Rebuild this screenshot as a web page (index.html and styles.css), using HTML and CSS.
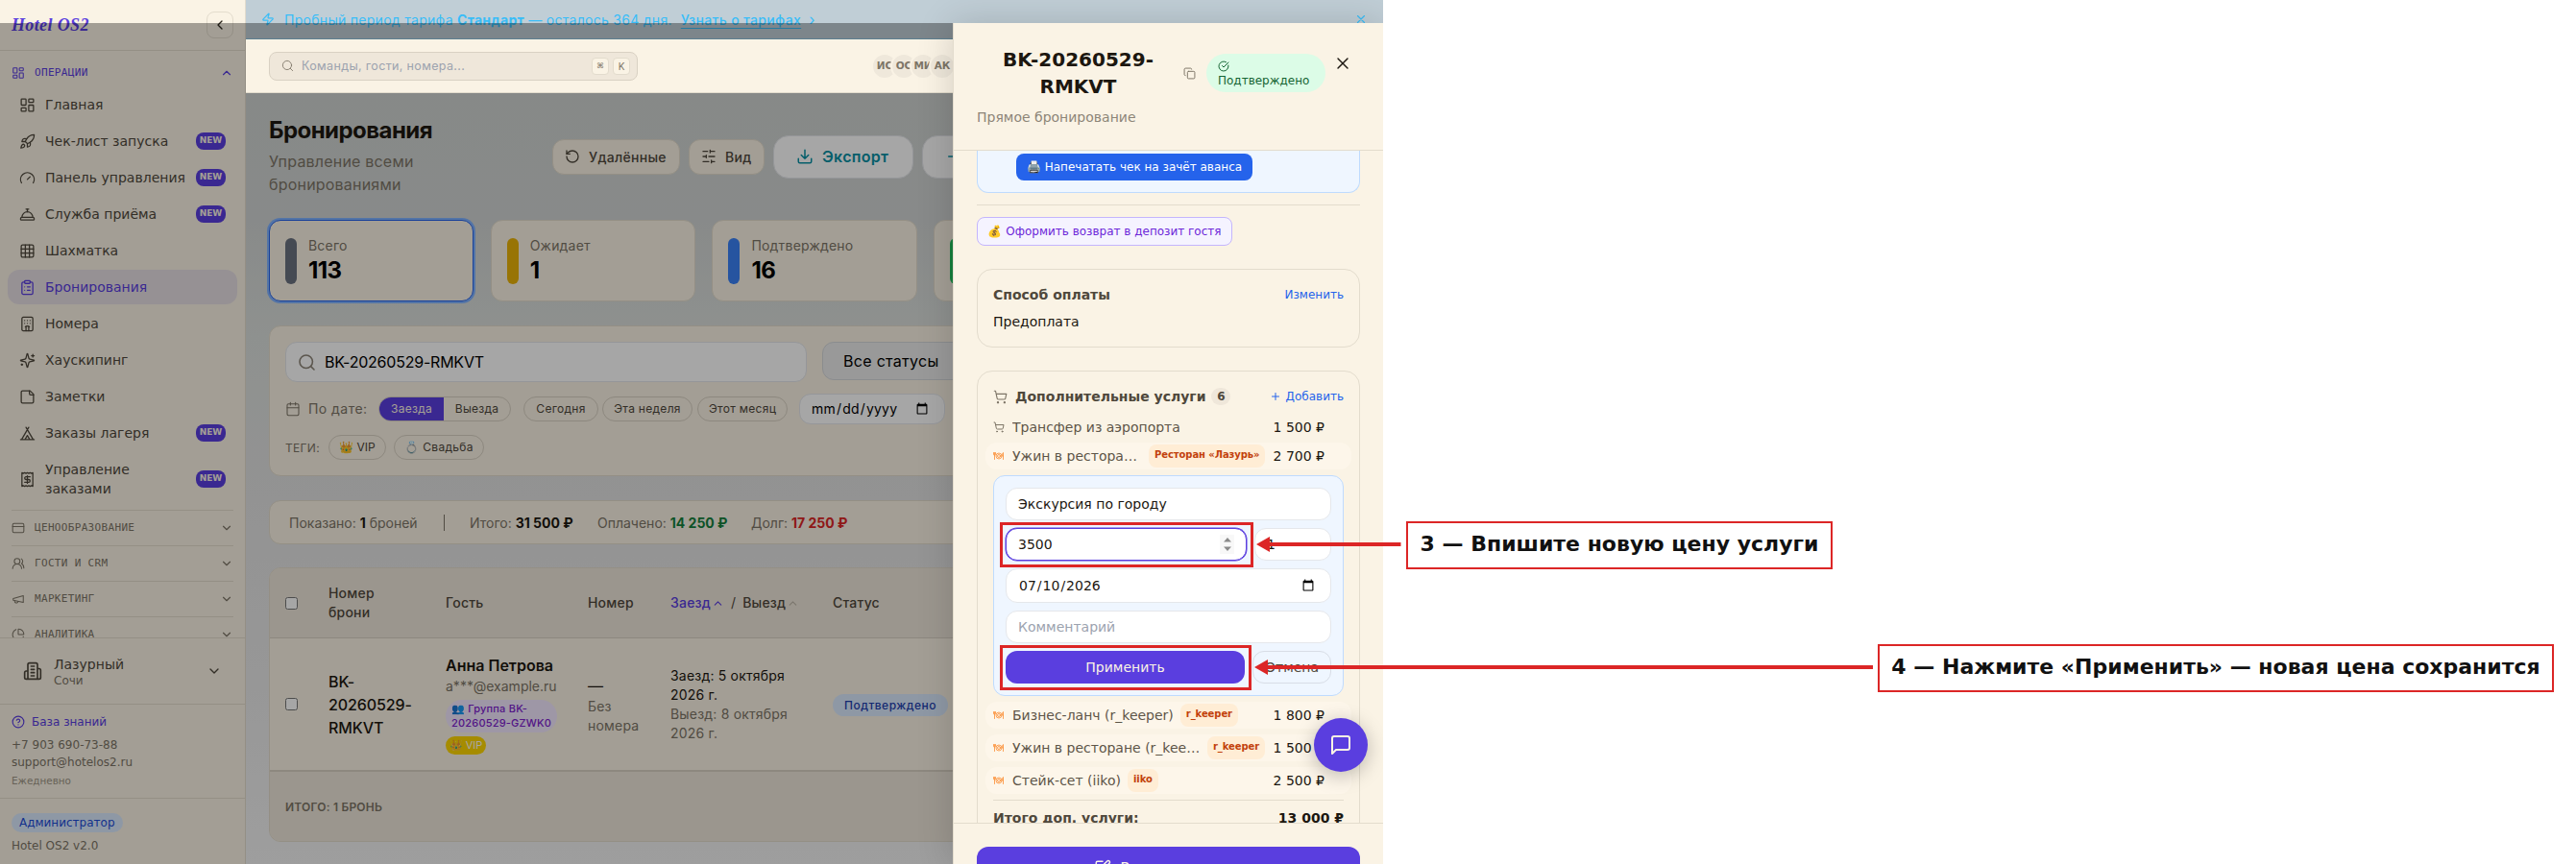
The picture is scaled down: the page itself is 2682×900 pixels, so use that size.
FILE: index.html
```html
<!DOCTYPE html>
<html lang="ru">
<head>
<meta charset="utf-8">
<title>Hotel OS2 — Бронирования</title>
<link rel="stylesheet" href="styles.css">
</head>
<body>
<svg class="defs" width="0" height="0" aria-hidden="true">
  <symbol id="dash" viewBox="0 0 24 24"><rect x="3" y="3" width="7" height="9" rx="1"/><rect x="14" y="3" width="7" height="5" rx="1"/><rect x="14" y="12" width="7" height="9" rx="1"/><rect x="3" y="16" width="7" height="5" rx="1"/></symbol>
  <symbol id="rocket" viewBox="0 0 24 24"><path d="M4.5 16.5c-1.5 1.26-2 5-2 5s3.74-.5 5-2c.71-.84.7-2.13-.09-2.91a2.18 2.18 0 0 0-2.91-.09z"/><path d="m12 15-3-3a22 22 0 0 1 2-3.95A12.88 12.88 0 0 1 22 2c0 2.72-.78 7.5-6 11a22.35 22.35 0 0 1-4 2z"/><path d="M9 12H4s.55-3.03 2-4c1.62-1.08 5 0 5 0"/><path d="M12 15v5s3.03-.55 4-2c1.08-1.62 0-5 0-5"/></symbol>
  <symbol id="gauge" viewBox="0 0 24 24"><path d="m12 14 4-4"/><path d="M3.34 19a10 10 0 1 1 17.32 0"/></symbol>
  <symbol id="bell" viewBox="0 0 24 24"><path d="M3 20a1 1 0 0 1-1-1v-1a2 2 0 0 1 2-2h16a2 2 0 0 1 2 2v1a1 1 0 0 1-1 1Z"/><path d="M20 16a8 8 0 1 0-16 0"/><path d="M12 4v4"/><path d="M10 4h4"/></symbol>
  <symbol id="grid" viewBox="0 0 24 24"><rect x="3" y="3" width="18" height="18" rx="2"/><path d="M3 9h18M3 15h18M9 3v18M15 3v18"/></symbol>
  <symbol id="clip" viewBox="0 0 24 24"><rect x="8" y="2" width="8" height="4" rx="1"/><path d="M16 4h2a2 2 0 0 1 2 2v14a2 2 0 0 1-2 2H6a2 2 0 0 1-2-2V6a2 2 0 0 1 2-2h2M12 11h4M12 16h4M8 11h.01M8 16h.01"/></symbol>
  <symbol id="hotel" viewBox="0 0 24 24"><rect x="4" y="2" width="16" height="20" rx="2"/><path d="M10 22v-6.57M12 11h.01M12 7h.01M14 15.43V22M15 16a5 5 0 0 0-6 0M16 11h.01M16 7h.01M8 11h.01M8 7h.01"/></symbol>
  <symbol id="sparkles" viewBox="0 0 24 24"><path d="M9.937 15.5A2 2 0 0 0 8.5 14.063l-6.135-1.582a.5.5 0 0 1 0-.962L8.5 9.936A2 2 0 0 0 9.937 8.5l1.582-6.135a.5.5 0 0 1 .963 0L14.063 8.5A2 2 0 0 0 15.5 9.937l6.135 1.581a.5.5 0 0 1 0 .964L15.5 14.063a2 2 0 0 0-1.437 1.437l-1.582 6.135a.5.5 0 0 1-.963 0zM20 3v4M22 5h-4M4 17v2M5 18H3"/></symbol>
  <symbol id="note" viewBox="0 0 24 24"><path d="M16 3H5a2 2 0 0 0-2 2v14a2 2 0 0 0 2 2h14a2 2 0 0 0 2-2V8Z"/><path d="M15 3v4a2 2 0 0 0 2 2h4"/></symbol>
  <symbol id="tent" viewBox="0 0 24 24"><path d="M3.5 21 14 3M20.5 21 10 3M15.5 21 12 15l-3.500 6M2 21h20"/></symbol>
  <symbol id="receipt" viewBox="0 0 24 24"><path d="M4 2v20l2-1 2 1 2-1 2 1 2-1 2 1 2-1 2 1V2l-2 1-2-1-2 1-2-1-2 1-2-1-2 1Z"/><path d="M16 8h-6a2 2 0 1 0 0 4h4a2 2 0 1 1 0 4H8M12 17.500v-11"/></symbol>
  <symbol id="card" viewBox="0 0 24 24"><rect x="2" y="4" width="20" height="16" rx="2.500"/><path d="M2 9.500h20"/></symbol>
  <symbol id="users" viewBox="0 0 24 24"><path d="M18 21a8 8 0 0 0-16 0"/><circle cx="10" cy="8" r="5"/><path d="M22 20c0-3.370-2-6.500-4-8a5 5 0 0 0-.45-8.300"/></symbol>
  <symbol id="mega" viewBox="0 0 24 24"><path d="m3 11 18-5v12L3 14v-3zM11.600 16.800a3 3 0 1 1-5.800-1.600"/></symbol>
  <symbol id="pie" viewBox="0 0 24 24"><path d="M21 12c.552 0 1.005-.449.950-.998a10 10 0 0 0-8.953-8.951c-.550-.055-.998.398-.998.950v8a1 1 0 0 0 1 1z"/><path d="M21.210 15.890A10 10 0 1 1 8 2.830"/></symbol>
  <symbol id="building" viewBox="0 0 24 24"><path d="M6 22V4a2 2 0 0 1 2-2h8a2 2 0 0 1 2 2v18ZM6 12H4a2 2 0 0 0-2 2v6a2 2 0 0 0 2 2h2M18 9h2a2 2 0 0 1 2 2v9a2 2 0 0 1-2 2h-2M10 6h4M10 10h4M10 14h4M10 18h4"/></symbol>
  <symbol id="help" viewBox="0 0 24 24"><circle cx="12" cy="12" r="10"/><path d="M9.090 9a3 3 0 0 1 5.830 1c0 2-3 3-3 3M12 17h.01"/></symbol>
  <symbol id="down" viewBox="0 0 24 24"><path d="m6 9 6 6 6-6"/></symbol>
  <symbol id="up" viewBox="0 0 24 24"><path d="m18 15-6-6-6 6"/></symbol>
  <symbol id="left" viewBox="0 0 24 24"><path d="m15 18-6-6 6-6"/></symbol>
  <symbol id="zap" viewBox="0 0 24 24"><path d="M4 14a1 1 0 0 1-.78-1.630l9.900-10.200a.5.5 0 0 1 .860.460l-1.920 6.020A1 1 0 0 0 13 10h7a1 1 0 0 1 .780 1.630l-9.900 10.200a.5.5 0 0 1-.860-.460l1.920-6.020A1 1 0 0 0 11 14z"/></symbol>
  <symbol id="search" viewBox="0 0 24 24"><circle cx="11" cy="11" r="8.500"/><path d="m21.500 21.500-4.300-4.300"/></symbol>
  <symbol id="undo" viewBox="0 0 24 24"><path d="M3 12a9 9 0 1 0 9-9 9.750 9.750 0 0 0-6.740 2.740L3 8"/><path d="M3 3v5h5"/></symbol>
  <symbol id="sliders" viewBox="0 0 24 24"><path d="M21 4h-7M10 4H3M21 12h-9M8 12H3M21 20h-5M12 20H3M14 2v4M8 10v4M16 18v4"/></symbol>
  <symbol id="download" viewBox="0 0 24 24"><path d="M21 15v4a2 2 0 0 1-2 2H5a2 2 0 0 1-2-2v-4M7 10l5 5 5-5M12 15V3"/></symbol>
  <symbol id="plus" viewBox="0 0 24 24"><path d="M5 12h14M12 5v14"/></symbol>
  <symbol id="cal" viewBox="0 0 24 24"><path d="M8 2v4M16 2v4M3 10h18"/><rect x="3" y="4" width="18" height="18" rx="2"/></symbol>
  <symbol id="copy" viewBox="0 0 24 24"><rect x="8" y="8" width="14" height="14" rx="2"/><path d="M4 16c-1.100 0-2-.9-2-2V4c0-1.100.9-2 2-2h10c1.100 0 2 .9 2 2"/></symbol>
  <symbol id="check" viewBox="0 0 24 24"><path d="M21.801 10A10 10 0 1 1 17 3.335M9 11l3 3L22 4"/></symbol>
  <symbol id="x" viewBox="0 0 24 24"><path d="M18 6 6 18M6 6l12 12"/></symbol>
  <symbol id="cart" viewBox="0 0 24 24"><circle cx="8" cy="21" r="1"/><circle cx="19" cy="21" r="1"/><path d="M2.050 2.050h2l2.660 12.420a2 2 0 0 0 2 1.580h9.780a2 2 0 0 0 1.950-1.570l1.650-7.430H5.120"/></symbol>
  <symbol id="chat" viewBox="0 0 24 24"><path d="M21 15a2 2 0 0 1-2 2H7l-4 4V5a2 2 0 0 1 2-2h14a2 2 0 0 1 2 2z"/></symbol>
  <symbol id="edit" viewBox="0 0 24 24"><path d="M12 3H5a2 2 0 0 0-2 2v14a2 2 0 0 0 2 2h14a2 2 0 0 0 2-2v-7M18.375 2.625a2.121 2.121 0 1 1 3 3L12 15l-4 1 1-4Z"/></symbol>
  <symbol id="dish" viewBox="0 0 24 16"><circle cx="12" cy="8" r="6"/><circle cx="12" cy="8" r="3"/><path d="M3 1v14M1 1v4c0 2 4 2 4 0V1M21 15V1c-1.800 1-2 5-1 7h1"/></symbol>
</svg>

<div class="app">
  <aside class="sidebar">
    <div class="brand"><span class="logo">Hotel OS2</span><span class="collapse"><svg class="i16"><use href="#left"/></svg></span></div>
    <nav class="nav">
      <div class="sec open"><svg class="i14"><use href="#dash"/></svg><span>ОПЕРАЦИИ</span><svg class="chev"><use href="#up"/></svg></div>
      <div class="items">
        <a class="item"><svg><use href="#dash"/></svg><span>Главная</span></a>
        <a class="item"><svg><use href="#rocket"/></svg><span>Чек-лист запуска</span><b>NEW</b></a>
        <a class="item"><svg><use href="#gauge"/></svg><span>Панель управления</span><b>NEW</b></a>
        <a class="item"><svg><use href="#bell"/></svg><span>Служба приёма</span><b>NEW</b></a>
        <a class="item"><svg><use href="#grid"/></svg><span>Шахматка</span></a>
        <a class="item active"><svg><use href="#clip"/></svg><span>Бронирования</span></a>
        <a class="item"><svg><use href="#hotel"/></svg><span>Номера</span></a>
        <a class="item"><svg><use href="#sparkles"/></svg><span>Хаускипинг</span></a>
        <a class="item"><svg><use href="#note"/></svg><span>Заметки</span></a>
        <a class="item"><svg><use href="#tent"/></svg><span>Заказы лагеря</span><b>NEW</b></a>
        <a class="item tall"><svg><use href="#receipt"/></svg><span>Управление<br>заказами</span><b>NEW</b></a>
      </div>
      <div class="sec"><svg class="i14"><use href="#card"/></svg><span>ЦЕНООБРАЗОВАНИЕ</span><svg class="chev"><use href="#down"/></svg></div>
      <div class="sec"><svg class="i14"><use href="#users"/></svg><span>ГОСТИ И CRM</span><svg class="chev"><use href="#down"/></svg></div>
      <div class="sec"><svg class="i14"><use href="#mega"/></svg><span>МАРКЕТИНГ</span><svg class="chev"><use href="#down"/></svg></div>
      <div class="sec"><svg class="i14"><use href="#pie"/></svg><span>АНАЛИТИКА</span><svg class="chev"><use href="#down"/></svg></div>
    </nav>
    <div class="property"><svg class="i20"><use href="#building"/></svg><div><div class="pname">Лазурный</div><div class="pcity">Сочи</div></div><svg class="i16"><use href="#down"/></svg></div>
    <div class="support"><a><svg class="i14"><use href="#help"/></svg>База знаний</a><div>+7 903 690-73-88</div><div>support@hotelos2.ru</div><small>Ежедневно</small></div>
    <div class="role"><span>Администратор</span><div>Hotel OS2 v2.0</div></div>
  </aside>

  <main class="main">
    <div class="banner"><svg class="i14"><use href="#zap"/></svg><span>Пробный период тарифа <b>Стандарт</b> — осталось 364 дня.</span><u>Узнать о тарифах</u><span class="gt">›</span><svg class="bx"><use href="#x"/></svg></div>
    <div class="topbar">
      <div class="cmd"><svg><use href="#search"/></svg><span>Команды, гости, номера...</span><kbd class="mod">⌘</kbd><kbd>K</kbd></div>
      <div class="avatars"><i>ИС</i><i>ОС</i><i>МИ</i><i>АК</i></div>
    </div>
    <div class="content">
      <div class="head">
        <div class="htext"><h1>Бронирования</h1><p>Управление всеми бронированиями</p></div>
        <div class="btn del"><svg><use href="#undo"/></svg>Удалённые</div>
        <div class="btn view"><svg><use href="#sliders"/></svg>Вид</div>
        <div class="btn big"><svg><use href="#download"/></svg>Экспорт</div>
        <div class="btn big"><svg><use href="#plus"/></svg>Новое</div>
      </div>
      <div class="stats">
        <div class="stat sel"><i class="gray"></i><div><span>Всего</span><b>113</b></div></div>
        <div class="stat"><i class="yellow"></i><div><span>Ожидает</span><b>1</b></div></div>
        <div class="stat"><i class="blue"></i><div><span>Подтверждено</span><b>16</b></div></div>
        <div class="stat"><i class="green"></i></div>
        <div class="stat"></div>
      </div>
      <div class="filters">
        <div class="frow one"><div class="find"><svg><use href="#search"/></svg>BK-20260529-RMKVT</div><div class="select">Все статусы</div></div>
        <div class="frow two"><svg class="calic"><use href="#cal"/></svg><span class="bydate">По дате:</span>
          <div class="seg"><span class="on">Заезда</span><span>Выезда</span></div>
          <span class="pill p1">Сегодня</span><span class="pill p2">Эта неделя</span><span class="pill p3">Этот месяц</span>
          <input class="date" type="date"></div>
        <div class="frow three"><span class="tags">ТЕГИ:</span><span class="pill vip">👑 VIP</span><span class="pill wed">💍 Свадьба</span></div>
      </div>
      <div class="summary"><span class="s1">Показано: <b>1</b> броней</span><i></i><span class="s2">Итого: <b>31 500 ₽</b></span><span class="s3">Оплачено: <b class="g">14 250 ₽</b></span><span>Долг: <b class="r">17 250 ₽</b></span></div>
      <div class="table">
        <div class="tr th"><span><input type="checkbox"></span><span>Номер<br>брони</span><span>Гость</span><span>Номер</span><span class="sort"><em>Заезд</em><svg class="v"><use href="#up"/></svg><q>/</q>Выезд<svg class="f"><use href="#up"/></svg></span><span>Статус</span></div>
        <div class="tr td"><span><input type="checkbox"></span><span class="num">BK-<br>20260529-<br>RMKVT</span>
          <span class="guest"><b>Анна Петрова</b><span class="mail">a***@example.ru</span><span class="group">👥 Группа BK-<br>20260529-GZWK0</span><span class="viptag">👑 VIP</span></span>
          <span class="room"><b>—</b>Без<br>номера</span>
          <span class="dates"><b>Заезд: 5 октября<br>2026 г.</b>Выезд: 8 октября<br>2026 г.</span>
          <span><span class="status">Подтверждено</span></span></div>
        <div class="tfoot">ИТОГО: 1 БРОНЬ</div>
      </div>
    </div>
  </main>

  <div class="overlay"></div>

  <section class="drawer">
    <header class="dhead">
      <div class="drow"><h2>BK-20260529-RMKVT</h2><svg class="cp"><use href="#copy"/></svg><span class="ok"><svg><use href="#check"/></svg>Подтверждено</span><svg class="close"><use href="#x"/></svg></div>
      <p>Прямое бронирование</p>
    </header>
    <div class="dbody">
      <div class="advance"><span>🖨️ Напечатать чек на зачёт аванса</span></div>
      <hr>
      <div class="deposit">💰 Оформить возврат в депозит гостя</div>
      <div class="pay"><div class="ptop"><b>Способ оплаты</b><a>Изменить</a></div><div>Предоплата</div></div>
      <div class="services">
        <div class="stitle"><svg><use href="#cart"/></svg><b>Дополнительные услуги</b><i>6</i><a><svg><use href="#plus"/></svg>Добавить</a></div>
        <div class="srow plain"><svg><use href="#cart"/></svg><span class="sname">Трансфер из аэропорта</span><span class="price">1 500 ₽</span></div>
        <div class="srow food"><svg><use href="#dish"/></svg><span class="sname cut1">Ужин в ресторане</span><em>Ресторан «Лазурь»</em><span class="price">2 700 ₽</span></div>
        <div class="form">
          <div class="inp">Экскурсия по городу</div>
          <div class="pair"><div class="inp focus">3500<span class="spin"><svg viewBox="0 0 10 16"><path d="M1 5.500 5 1l4 4.500zM1 10.500 5 15l4-4.500z"/></svg></span></div><div class="inp qty">1</div></div>
          <input class="inp dt" type="date" value="2026-07-10">
          <div class="inp ph">Комментарий</div>
          <div class="acts"><div class="apply">Применить</div><div class="cancel">Отмена</div></div>
        </div>
        <div class="srow food"><svg><use href="#dish"/></svg><span class="sname">Бизнес-ланч (r_keeper)</span><em>r_keeper</em><span class="price">1 800 ₽</span></div>
        <div class="srow food"><svg><use href="#dish"/></svg><span class="sname cut2">Ужин в ресторане (r_keeper)</span><em>r_keeper</em><span class="price">1 500 ₽</span></div>
        <div class="srow food"><svg><use href="#dish"/></svg><span class="sname">Стейк-сет (iiko)</span><em>iiko</em><span class="price">2 500 ₽</span></div>
        <div class="total"><span>Итого доп. услуги:</span><b>13 000 ₽</b></div>
      </div>
    </div>
    <footer class="dfoot"><div><svg><use href="#edit"/></svg>Редактировать</div></footer>
  </section>
  <div class="fab"><svg><use href="#chat"/></svg></div>
</div>

<div class="mark m1"></div>
<div class="mark m2"></div>
<svg class="arrows" width="2682" height="900"><path d="M1320 565h138.500v4H1320zM1308 567l14-8v16zM1318 693h632v4h-632zM1306 695l14-8v16z"/></svg>
<div class="note n1">3 — Впишите новую цену услуги</div>
<div class="note n2">4 — Нажмите «Применить» — новая цена сохранится</div>
</body>
</html>
```
FILE: styles.css
```css
* { box-sizing: border-box; }
body { margin: 0; width: 2682px; height: 900px; overflow: hidden; position: relative; background: #fff; font-family: "DejaVu Sans", sans-serif; color: #1c1710; }
svg { fill: none; stroke: currentColor; stroke-width: 2; stroke-linecap: round; stroke-linejoin: round; flex: none; }
.defs { position: absolute; }
h1, h2, p { margin: 0; }
i, em { font-style: normal; }
.i14 { width: 14px; height: 14px; } .i16 { width: 16px; height: 16px; } .i20 { width: 20px; height: 20px; }

.app { position: relative; width: 1440px; height: 900px; overflow: hidden; display: flex; }

/* Sidebar */
.sidebar { width: 256px; height: 900px; display: flex; flex-direction: column; background: #faf3e5; border-right: 1px solid #e3dccd; color: #4f483c; flex: none; }
.brand { height: 53px; flex: none; border-bottom: 1px solid #e3dccd; display: flex; justify-content: space-between; align-items: center; padding: 0 12px; }
.logo { font: italic bold 18px "Liberation Serif", serif; letter-spacing: .36px; color: #5a3edf; }
.collapse { width: 28px; height: 28px; border: 1px solid #e3dccd; border-radius: 8px; display: grid; place-items: center; color: #2e281e; }
.nav { flex: 1; overflow: hidden; padding: 8px 12px 0; }
.sec { height: 37px; border-top: 1px solid #e3dccd; display: flex; align-items: center; font: 11px "DejaVu Sans Mono", monospace; letter-spacing: .33px; color: #7d7567; }
.sec span { margin-left: 10px; flex: 1; position: relative; top: -1px; }
.sec.open { border: 0; height: 30px; color: #5a3edf; }
.sec .i14 { stroke-width: 1.8; }
.chev { width: 14px; height: 14px; }
.items { display: flex; flex-direction: column; gap: 2px; margin: 0 -4px 4px; }
.item { height: 36px; display: flex; align-items: center; padding: 0 12px; border-radius: 12px; font-size: 14px; line-height: 20px; }
.item svg { width: 17px; height: 17px; margin-right: 10px; stroke-width: 1.8; }
.item span { flex: 1; white-space: nowrap; }
.item b { width: 31px; height: 18px; border-radius: 8px; background: #5a3edf; color: #faf3e5; font-size: 9px; line-height: 16px; text-align: center; }
.item.active { background: #e7dfe4; color: #5a3edf; }
.item.tall { height: 56px; }
.property { height: 69px; flex: none; border-top: 1px solid #e3dccd; display: flex; align-items: center; padding: 0 24px; }
.property > div { flex: 1; margin-left: 12px; }
.pname { font-size: 14px; line-height: 20px; } .pcity { font-size: 12px; line-height: 15px; color: #7d7567; }
.support { height: 98px; flex: none; border-top: 1px solid #e3dccd; padding: 9px 12px; font-size: 12px; line-height: 18px; color: #7d7567; }
.support a { display: flex; align-items: center; gap: 7px; color: #5a3edf; margin-bottom: 6px; }
.support small { display: block; font-size: 10.4px; line-height: 20px; color: #a09787; }
.role { height: 69px; flex: none; border-top: 1px solid #e3dccd; padding: 15px 12px; font-size: 12px; color: #7d7567; }
.role span { display: inline-block; height: 20px; line-height: 20px; border-radius: 10px; padding: 0 8px; background: #dbeafe; color: #1d4ed8; }
.role div { margin-top: 6px; line-height: 16px; }

/* Main column */
.main { width: 1184px; flex: none; font-family: Inter, sans-serif; background: linear-gradient(#cdd2d0 0, #d2d5d4 230px, #dbdfdc 350px, #e2e2e2 520px, #e8e8e8 700px, #f3f3f3 900px); }
.banner { height: 41px; background: #c0ced6; border-bottom: 1px solid #8fc5df; display: flex; align-items: center; padding: 0 16px; color: #38bdf8; font-size: 14px; letter-spacing: .29px; }
.banner span { margin-left: 10px; } .banner u { margin-left: 9px; text-underline-offset: 3px; font-weight: 500; letter-spacing: .35px; }
.banner .gt { margin-left: 8px; font-size: 16px; }
.banner .bx { width: 14px; height: 14px; margin-left: auto; }
.topbar { position: relative; z-index: 2; height: 56px; background: #faf3e5; border-bottom: 1px solid #e3dccd; display: flex; align-items: center; padding: 0 24px; }
.cmd { width: 384px; height: 30px; border: 1px solid #d9d1c3; border-radius: 8px; background: #efe7da; display: flex; align-items: center; padding: 0 7px 0 12px; color: #9ca3af; }
.cmd svg { width: 13px; height: 13px; color: #7d7567; stroke-width: 1.6; margin-right: 8px; }
.cmd span { flex: 1; font: 12.5px Inter, sans-serif; letter-spacing: .35px; }
kbd { width: 18px; height: 18px; margin-left: 4px; border: 1px solid #e3dccd; border-radius: 4px; background: #faf3e5; color: #7d7567; display: grid; place-items: center; font: 10px Inter, "DejaVu Sans", sans-serif; }
kbd.mod { font: 8px "DejaVu Sans", sans-serif; }
.avatars { display: flex; margin-left: 243px; }
.avatars i { width: 28px; height: 28px; border-radius: 50%; border: 2px solid #faf3e5; background: #efe8db; margin-right: -8px; font: bold 10.500px/23px "DejaVu Sans", sans-serif; text-align: center; color: #7d7567; white-space: nowrap; position: relative; }
.content { padding: 24px 24px 0; width: 1184px; }
.head { height: 108px; display: flex; align-items: center; gap: 9px; padding-bottom: 24px; }
.htext { width: 286px; position: relative; top: -1px; }
h1 { font-size: 24px; line-height: 32px; letter-spacing: -.55px; color: #1c1710; }
.htext p { width: 190px; font-size: 16px; line-height: 24px; letter-spacing: .2px; color: #7d7567; margin-top: 4px; }
.btn { height: 37px; border: 1px solid #e3dccd; border-radius: 12px; background: #faf3e5; display: flex; align-items: center; font-size: 14px; font-weight: 500; letter-spacing: .3px; color: #4f483c; flex: none; padding: 0 12px; }
.btn svg { width: 16px; height: 16px; margin-right: 9px; }
.btn.del { width: 133px; } .btn.view { width: 79px; }
.btn.big { height: 45px; width: 146px; border-radius: 16px; background: #fff; border-color: #e5e7eb; color: #0891a5; font-size: 16px; font-weight: 600; padding: 0 23px; }
.btn.big svg { width: 18px; height: 18px; }
.stats { display: grid; grid-template-columns: repeat(5, 1fr); gap: 17.5px; }
.stat { height: 85px; border: 1px solid #e3dccd; border-radius: 12px; background: #faf3e5; padding: 0 16px; display: flex; align-items: center; gap: 12px; }
.stat.sel { border-color: #2563eb; box-shadow: 0 0 0 2px #80b2ff; }
.stat > i { width: 12px; height: 48px; border-radius: 6px; }
.gray { background: #6b7280; } .yellow { background: #eab308; } .blue { background: #3b82f6; } .green { background: #22c55e; }
.stat span { display: block; font-size: 14px; line-height: 20px; color: #7d7567; letter-spacing: .2px; }
.stat b { display: block; font-size: 24px; line-height: 32px; color: #000; letter-spacing: -.6px; }
.filters { margin-top: 25px; height: 157px; border: 1px solid #e3dccd; border-radius: 12px; background: #faf3e5; padding: 16px; }
.frow { display: flex; align-items: center; }
.frow.one { align-items: flex-start; height: 42px; }
.find { width: 543px; height: 42px; border: 1px solid #e5e7eb; border-radius: 12px; background: #fff; display: flex; align-items: center; padding-left: 12px; font-size: 16px; color: #000; letter-spacing: -.22px; }
.find svg { width: 19px; height: 19px; margin-right: 9px; color: #8d8578; }
.select { width: 400px; height: 40px; margin-left: 16px; border: 1px solid #d5d7db; border-radius: 12px; background: #ececec; padding-left: 21px; line-height: 38px; font-size: 16px; color: #000; letter-spacing: .3px; }
.frow.two { height: 31px; margin-top: 12px; }
.calic { width: 16px; height: 16px; color: #7d7567; stroke-width: 1.6; }
.bydate { width: 81px; padding-left: 8px; font-size: 14px; letter-spacing: .45px; color: #7d7567; white-space: nowrap; }
.seg { display: flex; width: 138px; height: 26px; border: 1px solid #d9d1c3; border-radius: 13px; overflow: hidden; font-size: 12px; line-height: 24px; letter-spacing: .25px; color: #4f483c; text-align: center; }
.seg span { flex: 1; } .seg .on { flex: none; width: 67px; background: #5a3edf; color: #faf3e5; }
.pill { height: 26px; border: 1px solid #d9d1c3; border-radius: 13px; font-size: 12px; line-height: 24px; letter-spacing: .3px; color: #4f483c; text-align: center; }
.p1 { width: 78px; margin-left: 13px; } .p2 { width: 94px; margin-left: 4px; } .p3 { width: 94px; margin-left: 5px; }
input.date { width: 152px; height: 32px; margin-left: 12px; border: 1px solid #e5e7eb; border-radius: 12px; background: #fff; font: 14px Inter, sans-serif; letter-spacing: .2px; padding: 0 14px 0 11px; color: #000; }
.frow.three { height: 26px; margin-top: 12px; }
.tags { width: 45px; font-size: 12px; color: #7d7567; letter-spacing: .3px; }
.vip { width: 60px; letter-spacing: 0; } .wed { width: 94px; margin-left: 8px; }
.summary { margin-top: 25px; height: 46px; border: 1px solid #e3dccd; border-radius: 12px; background: #faf3e5; display: flex; align-items: center; padding-left: 20px; font-size: 14px; color: #7d7567; white-space: nowrap; }
.summary b { color: #1c1710; } .summary b.g { color: #15803d; } .summary b.r { color: #dc2626; }
.summary i { width: 1px; height: 17px; background: #7d7567; margin-right: 26px; }
.s1 { width: 161px; } .s2 { width: 133px; } .s3 { width: 160px; }
.table { margin-top: 24px; height: 286px; border: 1px solid #e3dccd; border-radius: 12px; background: #faf3e5; overflow: hidden; }
.tr { display: grid; grid-template-columns: 45px 122px 148px 86px 169px 200px; padding-left: 16px; align-items: center; font-size: 14px; line-height: 20px; letter-spacing: .2px; }
.th { height: 73px; background: #efe7da; border-bottom: 1px solid #d9d1c3; font-weight: 500; color: #4f483c; }
input[type=checkbox] { display: block; width: 13px; height: 13px; margin: 0; }
.sort { display: flex; align-items: center; white-space: nowrap; } .sort em { color: #5a3edf; } .sort q { quotes: none; margin: 0 7px; font-weight: 400; }
.sort svg { width: 13px; height: 13px; margin-left: 1px; } .sort .v { color: #5a3edf; } .sort .f { opacity: .3; }
.td { height: 139px; border-bottom: 2px solid #d9d1c3; }
.num { font-size: 16px; line-height: 24px; font-weight: 500; letter-spacing: -.1px; }
.guest b { display: block; font-size: 16px; line-height: 24px; font-weight: 600; letter-spacing: 0; }
.mail { display: block; color: #7d7567; line-height: 20px; letter-spacing: 0; }
.group { display: block; width: 116px; height: 34px; margin-top: 4px; border-radius: 17px; background: #f3e8ff; color: #7e22ce; font-size: 11px; font-weight: 500; line-height: 15px; padding: 2px 6px; white-space: nowrap; }
.viptag { display: block; width: 42px; height: 19px; margin-top: 4px; border-radius: 10px; background: #ffd700; color: #fff; font-size: 11px; line-height: 19px; text-align: center; letter-spacing: 0; }
.room, .dates { color: #7d7567; } .room b { display: block; font-size: 16px; line-height: 24px; font-weight: 400; color: #1c1710; }
.dates b { display: block; font-weight: 400; color: #1c1710; }
.status { display: inline-block; position: relative; top: 1px; height: 23px; line-height: 23px; padding: 0 12px; border-radius: 12px; background: #dbeafe; color: #1e40af; font-size: 12px; font-weight: 500; letter-spacing: .5px; }
.tfoot { height: 73px; background: #efe7da; padding-left: 16px; line-height: 73px; font-size: 12px; font-weight: 600; letter-spacing: .2px; color: #7d7567; }

.overlay { position: absolute; left: 0; top: 24px; width: 1440px; height: 876px; background: rgba(0,0,0,.35); z-index: 1; }

/* Booking drawer */
.drawer { position: absolute; z-index: 3; left: 992px; top: 24px; width: 448px; height: 876px; background: #faf3e5; border-left: 1px solid #e3dccd; box-shadow: 0 0 36px rgba(0,0,0,.16); display: flex; flex-direction: column; }
.dhead { height: 133px; flex: none; border-bottom: 1px solid #e3dccd; padding: 24px 24px 0; }
.drow { display: flex; height: 56px; align-items: center; }
h2 { width: 209px; margin: 0 6px 0 0; padding-left: 2px; text-align: center; font-size: 20px; line-height: 28px; font-weight: bold; }
.cp { width: 13px; height: 13px; color: #7d7567; stroke-width: 1.8; }
.ok { width: 124px; height: 40px; margin-left: 11px; border-radius: 20px; background: #dcfce7; color: #166534; font-size: 12px; line-height: 16px; padding: 7px 12px; }
.ok svg { display: block; width: 12px; height: 12px; margin-bottom: 1px; }
.drow .close { width: 20px; height: 20px; margin: -20px 0 0 8px; stroke-width: 1.7; }
.dhead p { margin-top: 8px; font-size: 14px; line-height: 20px; color: #8d8578; }
.dbody { flex: 1; overflow: hidden; padding: 0 24px; display: flex; flex-direction: column; }
.dbody > * { flex: none; }
.advance { height: 44px; border: 1px solid #bfdbfe; border-top: 0; border-radius: 0 0 12px 12px; background: #eff6ff; padding: 3px 40px; }
.advance span { display: block; width: 246px; height: 28px; border-radius: 8px; background: #2563eb; color: #fff; font-size: 12px; line-height: 28px; text-align: center; white-space: nowrap; }
hr { width: 100%; height: 1px; border: 0; background: #e3dccd; margin: 12px 0; }
.deposit { width: 266px; height: 30px; border: 1px solid #c4b5fd; border-radius: 8px; background: #f5f3ff; color: #6d28d9; font-size: 12px; line-height: 28px; text-align: center; white-space: nowrap; }
.pay { margin-top: 24px; height: 82px; border: 1px solid #e3dccd; border-radius: 16px; padding: 16px; font-size: 14px; line-height: 20px; }
.ptop { display: flex; justify-content: space-between; margin-bottom: 8px; color: #4f483c; } .ptop a { font-size: 12px; color: #2563eb; }
.services { margin-top: 24px; height: 500px; border: 1px solid #e3dccd; border-radius: 16px; padding: 15px 16px; }
.stitle { height: 22px; display: flex; align-items: center; font-size: 14px; color: #4f483c; }
.stitle > svg { width: 15px; height: 15px; margin-right: 8px; color: #7d7567; stroke-width: 1.8; }
.stitle i { width: 20px; height: 18px; border-radius: 9px; margin-left: 6px; background: #efe7da; font-size: 12px; font-weight: bold; line-height: 18px; text-align: center; }
.stitle a { margin-left: auto; display: flex; align-items: center; gap: 5px; font-size: 12px; color: #2563eb; } .stitle a svg { width: 12px; height: 12px; }
.srow { height: 28px; margin: 0 -8px 6px; padding: 0 28px 0 8px; border-radius: 12px; display: flex; align-items: center; font-size: 14px; }
.srow svg { width: 12px; height: 12px; margin-right: 8px; color: #7d7567; }
.srow.plain { height: 20px; margin-top: 11px; }
.food { background: #fdf6ea; } .food svg { color: #fb923c; stroke-width: 1.7; }
.sname { color: #5d5548; white-space: nowrap; overflow: hidden; text-overflow: ellipsis; } .cut1 { width: 132px; } .cut2 { width: 198px; }
.srow em { height: 24px; margin-left: 7px; padding: 0 6px; border-radius: 8px; background: #ffedd5; color: #c2410c; font-size: 10px; font-weight: bold; line-height: 22px; letter-spacing: -.08px; white-space: nowrap; }
.srow .cut1 + em { margin-left: 10px; } .srow .cut2 + em { margin-left: 5px; }
.price { margin-left: auto; white-space: nowrap; }
.form { height: 230px; margin-bottom: 6px; border: 1px solid #bfdbfe; border-radius: 12px; background: #eff6ff; padding: 12px; display: flex; flex-direction: column; gap: 8px; }
.inp { width: 100%; height: 34px; flex: none; border: 1px solid #e5e7eb; border-radius: 12px; background: #fff; padding: 0 12px; font: 14px/32px "DejaVu Sans", sans-serif; color: #1c1710; }
.pair { display: flex; gap: 8px; }
.inp.focus { width: 251px; border-color: #5a3edf; box-shadow: 0 0 0 .5px #5a3edf; display: flex; justify-content: space-between; }
.inp.qty { flex: 1; width: 0; }
.spin { width: 15px; height: 20px; margin-top: 6px; background: #f8f8f8; display: grid; place-items: center; } .spin svg { width: 10px; height: 16px; fill: #8b8b8b; stroke: none; }
.inp.dt { height: 36px; padding-right: 14px; } .ph { color: #9ca3af; }
.acts { display: flex; gap: 8px; font-size: 14px; line-height: 34px; text-align: center; }
.apply { width: 249px; height: 34px; border-radius: 12px; background: #5a3edf; color: #faf3e5; }
.cancel { flex: 1; height: 34px; border: 1px solid #d8dde6; border-radius: 12px; line-height: 32px; color: #4f483c; }
.total { border-top: 1px solid #e3dccd; display: flex; justify-content: space-between; padding-top: 8px; font-size: 14px; line-height: 20px; font-weight: bold; } .total span { color: #4f483c; }
.dfoot { height: 43px; flex: none; border-top: 1px solid #e3dccd; padding: 24px 24px 0; overflow: hidden; }
.dfoot div { height: 44px; border-radius: 12px; background: #5a3edf; color: #faf3e5; display: flex; align-items: center; justify-content: center; gap: 9px; font-size: 16px; } .dfoot svg { width: 18px; height: 18px; }
.fab { position: absolute; z-index: 4; left: 1368px; top: 748px; width: 56px; height: 56px; border-radius: 50%; background: #5a3edf; color: #faf3e5; display: grid; place-items: center; box-shadow: 0 4px 20px rgba(0,0,0,.25); } .fab svg { width: 24px; height: 24px; }

/* Callouts over the screen */
.mark { position: absolute; z-index: 5; border: 3px solid #dc2626; }
.m1 { left: 1041px; top: 544px; width: 264px; height: 47px; } .m2 { left: 1041px; top: 672px; width: 262px; height: 47px; }
.arrows { position: absolute; z-index: 5; left: 0; top: 0; fill: #dc2626; stroke: none; }
.note { position: absolute; height: 50px; border: 2px solid #dc2626; background: #fff; color: #111; font-weight: bold; font-size: 22px; line-height: 43px; text-align: center; white-space: nowrap; }
.n1 { left: 1464px; top: 543px; width: 444px; } .n2 { left: 1955px; top: 671px; width: 704px; }
```
